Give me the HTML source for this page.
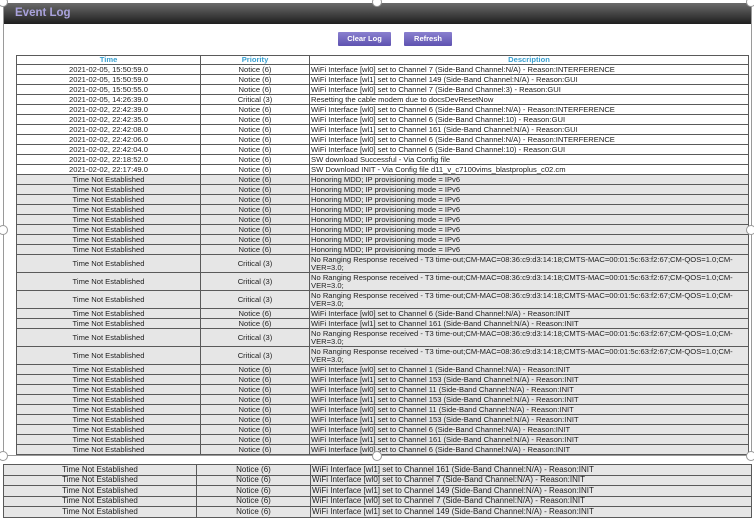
<!DOCTYPE html>
<html><head><meta charset="utf-8"><style>
*{margin:0;padding:0;box-sizing:border-box}
body{width:754px;height:520px;background:#fff;position:relative;overflow:hidden;font-family:"Liberation Sans",Arial,sans-serif}
.panel{position:absolute;left:3px;top:3px;width:749px;height:453px;border:1px solid #9a9a9a;border-top:none;overflow:hidden;background:#fff}
.hdr{position:absolute;left:0;top:0;width:100%;height:21px;background:linear-gradient(#6b6b6b,#1e1e1e);color:#a9a2dc;font-weight:bold;font-size:11.5px;line-height:21px;padding-left:11px}
.btn{position:absolute;top:29px;height:14px;background:linear-gradient(#8a80cf,#5e52b0);color:#fff;font-weight:bold;font-size:7.5px;line-height:14px;text-align:center;border-radius:1px}
table{position:absolute;border-collapse:collapse;font-size:7.6px;color:#222;table-layout:fixed}
td{border:1px solid #5a5a5a;height:10px;line-height:8px;padding:0 1px;white-space:nowrap;overflow:hidden}
td.c{text-align:center}
tr.g td{background:#e6e6e6}
tr.t td{height:18px}
td.w{white-space:normal}
th{border:1px solid #5a5a5a;color:#3aa0d0;font-weight:bold;font-size:7.6px;height:9px;line-height:8px}
.h{position:absolute;width:10px;height:10px;border-radius:50%;background:#fff;border:1.5px solid #999}
#t2{font-size:8px}
#t2 td{height:10.5px;line-height:8px;background:#e6e6e6;border:1.5px solid #5a5a5a}
</style></head><body>
<div class="panel">
<div class="hdr">Event Log</div>
<div class="btn" style="left:334px;width:53px">Clear Log</div>
<div class="btn" style="left:400px;width:48px">Refresh</div>
<table style="left:12px;top:52px;width:733px">
<colgroup><col style="width:184px"><col style="width:109px"><col></colgroup>
<tr><th>Time</th><th>Priority</th><th>Description</th></tr>
<tr><td class="c">2021-02-05, 15:50:59.0</td><td class="c">Notice (6)</td><td>WiFi Interface [wl0] set to Channel 7 (Side-Band Channel:N/A) - Reason:INTERFERENCE</td></tr>
<tr><td class="c">2021-02-05, 15:50:59.0</td><td class="c">Notice (6)</td><td>WiFi Interface [wl1] set to Channel 149 (Side-Band Channel:N/A) - Reason:GUI</td></tr>
<tr><td class="c">2021-02-05, 15:50:55.0</td><td class="c">Notice (6)</td><td>WiFi Interface [wl0] set to Channel 7 (Side-Band Channel:3) - Reason:GUI</td></tr>
<tr><td class="c">2021-02-05, 14:26:39.0</td><td class="c">Critical (3)</td><td>Resetting the cable modem due to docsDevResetNow</td></tr>
<tr><td class="c">2021-02-02, 22:42:39.0</td><td class="c">Notice (6)</td><td>WiFi Interface [wl0] set to Channel 6 (Side-Band Channel:N/A) - Reason:INTERFERENCE</td></tr>
<tr><td class="c">2021-02-02, 22:42:35.0</td><td class="c">Notice (6)</td><td>WiFi Interface [wl0] set to Channel 6 (Side-Band Channel:10) - Reason:GUI</td></tr>
<tr><td class="c">2021-02-02, 22:42:08.0</td><td class="c">Notice (6)</td><td>WiFi Interface [wl1] set to Channel 161 (Side-Band Channel:N/A) - Reason:GUI</td></tr>
<tr><td class="c">2021-02-02, 22:42:06.0</td><td class="c">Notice (6)</td><td>WiFi Interface [wl0] set to Channel 6 (Side-Band Channel:N/A) - Reason:INTERFERENCE</td></tr>
<tr><td class="c">2021-02-02, 22:42:04.0</td><td class="c">Notice (6)</td><td>WiFi Interface [wl0] set to Channel 6 (Side-Band Channel:10) - Reason:GUI</td></tr>
<tr><td class="c">2021-02-02, 22:18:52.0</td><td class="c">Notice (6)</td><td>SW download Successful - Via Config file</td></tr>
<tr><td class="c">2021-02-02, 22:17:49.0</td><td class="c">Notice (6)</td><td>SW Download INIT - Via Config file d11_v_c7100vims_blastproplus_c02.cm</td></tr>
<tr class="g"><td class="c">Time Not Established</td><td class="c">Notice (6)</td><td>Honoring MDD; IP provisioning mode = IPv6</td></tr>
<tr class="g"><td class="c">Time Not Established</td><td class="c">Notice (6)</td><td>Honoring MDD; IP provisioning mode = IPv6</td></tr>
<tr class="g"><td class="c">Time Not Established</td><td class="c">Notice (6)</td><td>Honoring MDD; IP provisioning mode = IPv6</td></tr>
<tr class="g"><td class="c">Time Not Established</td><td class="c">Notice (6)</td><td>Honoring MDD; IP provisioning mode = IPv6</td></tr>
<tr class="g"><td class="c">Time Not Established</td><td class="c">Notice (6)</td><td>Honoring MDD; IP provisioning mode = IPv6</td></tr>
<tr class="g"><td class="c">Time Not Established</td><td class="c">Notice (6)</td><td>Honoring MDD; IP provisioning mode = IPv6</td></tr>
<tr class="g"><td class="c">Time Not Established</td><td class="c">Notice (6)</td><td>Honoring MDD; IP provisioning mode = IPv6</td></tr>
<tr class="g"><td class="c">Time Not Established</td><td class="c">Notice (6)</td><td>Honoring MDD; IP provisioning mode = IPv6</td></tr>
<tr class="g t"><td class="c">Time Not Established</td><td class="c">Critical (3)</td><td class="w">No Ranging Response received - T3 time-out;CM-MAC=08:36:c9:d3:14:18;CMTS-MAC=00:01:5c:63:f2:67;CM-QOS=1.0;CM-VER=3.0;</td></tr>
<tr class="g t"><td class="c">Time Not Established</td><td class="c">Critical (3)</td><td class="w">No Ranging Response received - T3 time-out;CM-MAC=08:36:c9:d3:14:18;CMTS-MAC=00:01:5c:63:f2:67;CM-QOS=1.0;CM-VER=3.0;</td></tr>
<tr class="g t"><td class="c">Time Not Established</td><td class="c">Critical (3)</td><td class="w">No Ranging Response received - T3 time-out;CM-MAC=08:36:c9:d3:14:18;CMTS-MAC=00:01:5c:63:f2:67;CM-QOS=1.0;CM-VER=3.0;</td></tr>
<tr class="g"><td class="c">Time Not Established</td><td class="c">Notice (6)</td><td>WiFi Interface [wl0] set to Channel 6 (Side-Band Channel:N/A) - Reason:INIT</td></tr>
<tr class="g"><td class="c">Time Not Established</td><td class="c">Notice (6)</td><td>WiFi Interface [wl1] set to Channel 161 (Side-Band Channel:N/A) - Reason:INIT</td></tr>
<tr class="g t"><td class="c">Time Not Established</td><td class="c">Critical (3)</td><td class="w">No Ranging Response received - T3 time-out;CM-MAC=08:36:c9:d3:14:18;CMTS-MAC=00:01:5c:63:f2:67;CM-QOS=1.0;CM-VER=3.0;</td></tr>
<tr class="g t"><td class="c">Time Not Established</td><td class="c">Critical (3)</td><td class="w">No Ranging Response received - T3 time-out;CM-MAC=08:36:c9:d3:14:18;CMTS-MAC=00:01:5c:63:f2:67;CM-QOS=1.0;CM-VER=3.0;</td></tr>
<tr class="g"><td class="c">Time Not Established</td><td class="c">Notice (6)</td><td>WiFi Interface [wl0] set to Channel 1 (Side-Band Channel:N/A) - Reason:INIT</td></tr>
<tr class="g"><td class="c">Time Not Established</td><td class="c">Notice (6)</td><td>WiFi Interface [wl1] set to Channel 153 (Side-Band Channel:N/A) - Reason:INIT</td></tr>
<tr class="g"><td class="c">Time Not Established</td><td class="c">Notice (6)</td><td>WiFi Interface [wl0] set to Channel 11 (Side-Band Channel:N/A) - Reason:INIT</td></tr>
<tr class="g"><td class="c">Time Not Established</td><td class="c">Notice (6)</td><td>WiFi Interface [wl1] set to Channel 153 (Side-Band Channel:N/A) - Reason:INIT</td></tr>
<tr class="g"><td class="c">Time Not Established</td><td class="c">Notice (6)</td><td>WiFi Interface [wl0] set to Channel 11 (Side-Band Channel:N/A) - Reason:INIT</td></tr>
<tr class="g"><td class="c">Time Not Established</td><td class="c">Notice (6)</td><td>WiFi Interface [wl1] set to Channel 153 (Side-Band Channel:N/A) - Reason:INIT</td></tr>
<tr class="g"><td class="c">Time Not Established</td><td class="c">Notice (6)</td><td>WiFi Interface [wl0] set to Channel 6 (Side-Band Channel:N/A) - Reason:INIT</td></tr>
<tr class="g"><td class="c">Time Not Established</td><td class="c">Notice (6)</td><td>WiFi Interface [wl1] set to Channel 161 (Side-Band Channel:N/A) - Reason:INIT</td></tr>
<tr class="g"><td class="c">Time Not Established</td><td class="c">Notice (6)</td><td>WiFi Interface [wl0] set to Channel 6 (Side-Band Channel:N/A) - Reason:INIT</td></tr>
<tr class="g"><td class="c">Time Not Established</td><td class="c">Notice (6)</td><td>WiFi Interface [wl1] set to Channel 7 (Side-Band Channel:N/A) - Reason:INIT</td></tr>
</table>
</div>
<div class="h" style="left:-2px;top:-3px"></div>
<div class="h" style="left:372px;top:-3px"></div>
<div class="h" style="left:746px;top:-3px"></div>
<div class="h" style="left:-2px;top:225px"></div>
<div class="h" style="left:746px;top:225px"></div>
<div class="h" style="left:-2px;top:451px"></div>
<div class="h" style="left:372px;top:451px"></div>
<div class="h" style="left:746px;top:451px"></div>
<table id="t2" style="left:3px;top:464px;width:749px">
<colgroup><col style="width:193px"><col style="width:114px"><col></colgroup>
<tr><td class="c">Time Not Established</td><td class="c">Notice (6)</td><td>WiFi Interface [wl1] set to Channel 161 (Side-Band Channel:N/A) - Reason:INIT</td></tr>
<tr><td class="c">Time Not Established</td><td class="c">Notice (6)</td><td>WiFi Interface [wl0] set to Channel 7 (Side-Band Channel:N/A) - Reason:INIT</td></tr>
<tr><td class="c">Time Not Established</td><td class="c">Notice (6)</td><td>WiFi Interface [wl1] set to Channel 149 (Side-Band Channel:N/A) - Reason:INIT</td></tr>
<tr><td class="c">Time Not Established</td><td class="c">Notice (6)</td><td>WiFi Interface [wl0] set to Channel 7 (Side-Band Channel:N/A) - Reason:INIT</td></tr>
<tr><td class="c">Time Not Established</td><td class="c">Notice (6)</td><td>WiFi Interface [wl1] set to Channel 149 (Side-Band Channel:N/A) - Reason:INIT</td></tr>
</table>
</body></html>
